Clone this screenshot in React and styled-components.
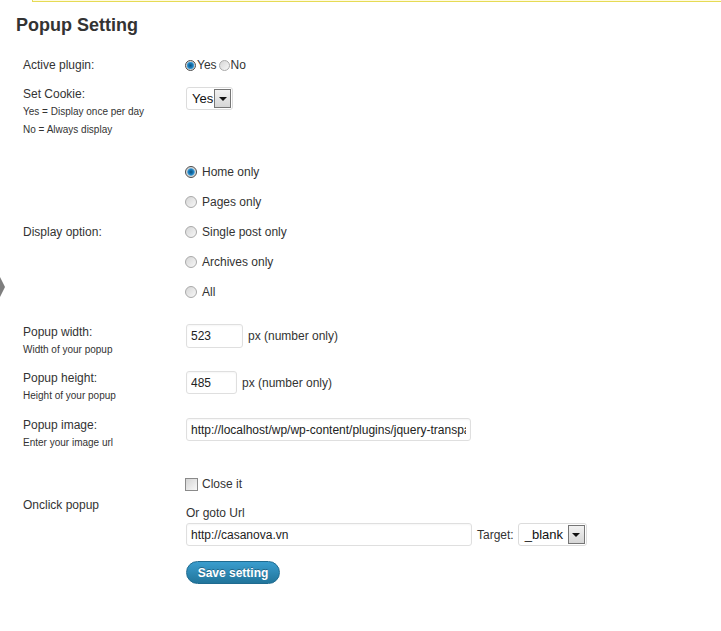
import React from "react";
import styled, { createGlobalStyle } from "styled-components";

const GlobalStyle = createGlobalStyle`
  body {
    margin: 0;
    background: #fff;
  }
`;

const Page = styled.div`
  position: relative;
  min-height: 631px;
  overflow: hidden;
  font-family: "Liberation Sans", Arial, sans-serif;
  font-size: 12px;
  color: #333;
`;

const Notice = styled.div`
  margin-left: 32px;
  height: 1px;
  background: #fffbe0;
  border-left: 1px solid #e6db55;
  border-bottom: 1px solid #e6db55;
`;

const MenuArrow = styled.div`
  position: absolute;
  left: 0;
  top: 277px;
  width: 0;
  height: 0;
  border-top: 10px solid transparent;
  border-bottom: 10px solid transparent;
  border-left: 5px solid #7e7e7e;
`;

const Wrap = styled.div`
  padding: 0 16px;
`;

const Title = styled.h2`
  margin: 12px 0 0;
  font-size: 18px;
  line-height: 22px;
  font-weight: bold;
  color: #333;
`;

const Form = styled.div`
  padding-left: 7px;
`;

const Row = styled.div`
  display: flex;
  align-items: ${(p) => (p.$center ? "center" : "flex-start")};
  margin-top: ${(p) => p.$gap || 0}px;
`;

const Label = styled.div`
  width: 163px;
  flex: none;
  line-height: 18px;
  padding-top: ${(p) => p.$pad || 0}px;
`;

const Note = styled.span`
  display: block;
  font-size: 10px;
  line-height: 18px;
`;

const Field = styled.div`
  flex: 1;
  line-height: 18px;
`;

const Inline = styled.div`
  display: flex;
  align-items: center;
  margin-top: ${(p) => p.$top || 0}px;
`;

const Option = styled.label`
  display: flex;
  align-items: center;
  height: ${(p) => p.$h || 18}px;
  margin-right: ${(p) => p.$space || 0}px;
`;

const Radio = styled.span`
  display: inline-block;
  box-sizing: border-box;
  width: ${(p) => p.$size}px;
  height: ${(p) => p.$size}px;
  margin-left: -1px;
  margin-right: ${(p) => p.$gap}px;
  border-radius: 50%;
  border: 1px solid ${(p) => (p.$checked ? "#4a4a4a" : "#a9a9a9")};
  background: ${(p) =>
    p.$checked
      ? "radial-gradient(circle at 50% 50%, #0b4f7c 0, #1d7fc0 2.6px, #4aa6dc 3.4px, #cfcfcf 4px, #f2f2f2 6px)"
      : "linear-gradient(135deg, #d6d6d6, #f7f7f7)"};
`;

const Checkbox = styled.span`
  display: inline-block;
  box-sizing: border-box;
  width: 13px;
  height: 13px;
  margin-left: -1px;
  margin-right: 4px;
  border: 1px solid #8a8a8a;
  background: linear-gradient(135deg, #d4d4d4, #f8f8f8);
`;

const TextInput = styled.input`
  box-sizing: border-box;
  width: ${(p) => p.$w}px;
  height: ${(p) => p.$h || 23}px;
  margin: ${(p) => p.$top || 0}px 0 0;
  padding: 0 4px;
  border: 1px solid #dfdfdf;
  border-radius: 3px;
  background: #fff;
  font-family: "Liberation Sans", Arial, sans-serif;
  font-size: 12px;
  color: #222;
  outline: none;
  box-shadow: inset 0 1px 2px rgba(0, 0, 0, 0.04);
`;

const Unit = styled.span`
  margin-left: 5px;
`;

const Select = styled.div`
  box-sizing: border-box;
  display: flex;
  align-items: center;
  width: ${(p) => p.$w}px;
  height: 23px;
  margin-top: ${(p) => p.$top || 0}px;
  margin-left: ${(p) => p.$left || 0}px;
  padding: 0 1px 0 ${(p) => p.$pad || 5}px;
  border: 1px solid #dcdcdc;
  border-radius: 3px;
  background: #fff;
  font-size: 13px;
  color: #111;
`;

const SelectButton = styled.span`
  margin-left: auto;
  box-sizing: border-box;
  width: 17px;
  height: 19px;
  display: flex;
  align-items: center;
  justify-content: center;
  border: 1px solid #767676;
  background: linear-gradient(#f2f2f2, #d6d6d6);
  &::after {
    content: "";
    width: 0;
    height: 0;
    margin-top: 1px;
    border-left: 4px solid transparent;
    border-right: 4px solid transparent;
    border-top: 4px solid #111;
  }
`;

const Text = styled.span`
  margin-left: ${(p) => p.$left || 0}px;
`;

const Button = styled.button`
  box-sizing: border-box;
  width: 94px;
  height: 23px;
  margin: 15px 0 0 163px;
  padding: 0;
  border: 1px solid #1f6b90;
  border-radius: 12px;
  background: linear-gradient(#3a9dce, #21759b);
  color: #fff;
  font-family: "Liberation Sans", Arial, sans-serif;
  font-size: 12px;
  font-weight: bold;
  text-shadow: 0 -1px 0 rgba(0, 0, 0, 0.3);
  cursor: pointer;
`;

const displayOptions = [
  { label: "Home only", checked: true },
  { label: "Pages only" },
  { label: "Single post only" },
  { label: "Archives only" },
  { label: "All" },
];

export default function App() {
  return (
    <Page>
      <GlobalStyle />
      <Notice />
      <MenuArrow />
      <Wrap>
        <Title>Popup Setting</Title>
        <Form>
          <Row $gap={20}>
            <Label>Active plugin:</Label>
            <Field>
              <Inline>
                <Option $space={3}>
                  <Radio $size={11} $gap={1} $checked />
                  Yes
                </Option>
                <Option>
                  <Radio $size={11} $gap={1} />
                  No
                </Option>
              </Inline>
            </Field>
          </Row>

          <Row $gap={11}>
            <Label>
              Set Cookie:
              <Note>Yes = Display once per day</Note>
              <Note>No = Always display</Note>
            </Label>
            <Field>
              <Select $w={47} $top={2}>
                Yes
                <SelectButton />
              </Select>
            </Field>
          </Row>

          <Row $gap={18} $center>
            <Label>Display option:</Label>
            <Field>
              {displayOptions.map((o) => (
                <Option key={o.label} $h={30}>
                  <Radio $size={12} $gap={5} $checked={o.checked} />
                  {o.label}
                </Option>
              ))}
            </Field>
          </Row>

          <Row $gap={16}>
            <Label>
              Popup width:
              <Note>Width of your popup</Note>
            </Label>
            <Field>
              <Inline $top={1}>
                <TextInput $w={57} $h={24} defaultValue="523" />
                <Unit>px (number only)</Unit>
              </Inline>
            </Field>
          </Row>

          <Row $gap={10}>
            <Label>
              Popup height:
              <Note>Height of your popup</Note>
            </Label>
            <Field>
              <Inline $top={2}>
                <TextInput $w={51} defaultValue="485" />
                <Unit>px (number only)</Unit>
              </Inline>
            </Field>
          </Row>

          <Row $gap={11}>
            <Label>
              Popup image:
              <Note>Enter your image url</Note>
            </Label>
            <Field>
              <TextInput
                $w={285}
                $top={2}
                defaultValue="http://localhost/wp/wp-content/plugins/jquery-transparent-popup/images/popup.png"
              />
            </Field>
          </Row>

          <Row $gap={23}>
            <Label $pad={21}>Onclick popup</Label>
            <Field>
              <Option>
                <Checkbox />
                Close it
              </Option>
              <Inline $top={11}>Or goto Url</Inline>
              <Inline $top={1}>
                <TextInput $w={286} defaultValue="http://casanova.vn" />
                <Text $left={5}>Target:</Text>
                <Select $w={69} $left={4} $pad={6}>
                  _blank
                  <SelectButton />
                </Select>
              </Inline>
            </Field>
          </Row>

          <Button>Save setting</Button>
        </Form>
      </Wrap>
    </Page>
  );
}
